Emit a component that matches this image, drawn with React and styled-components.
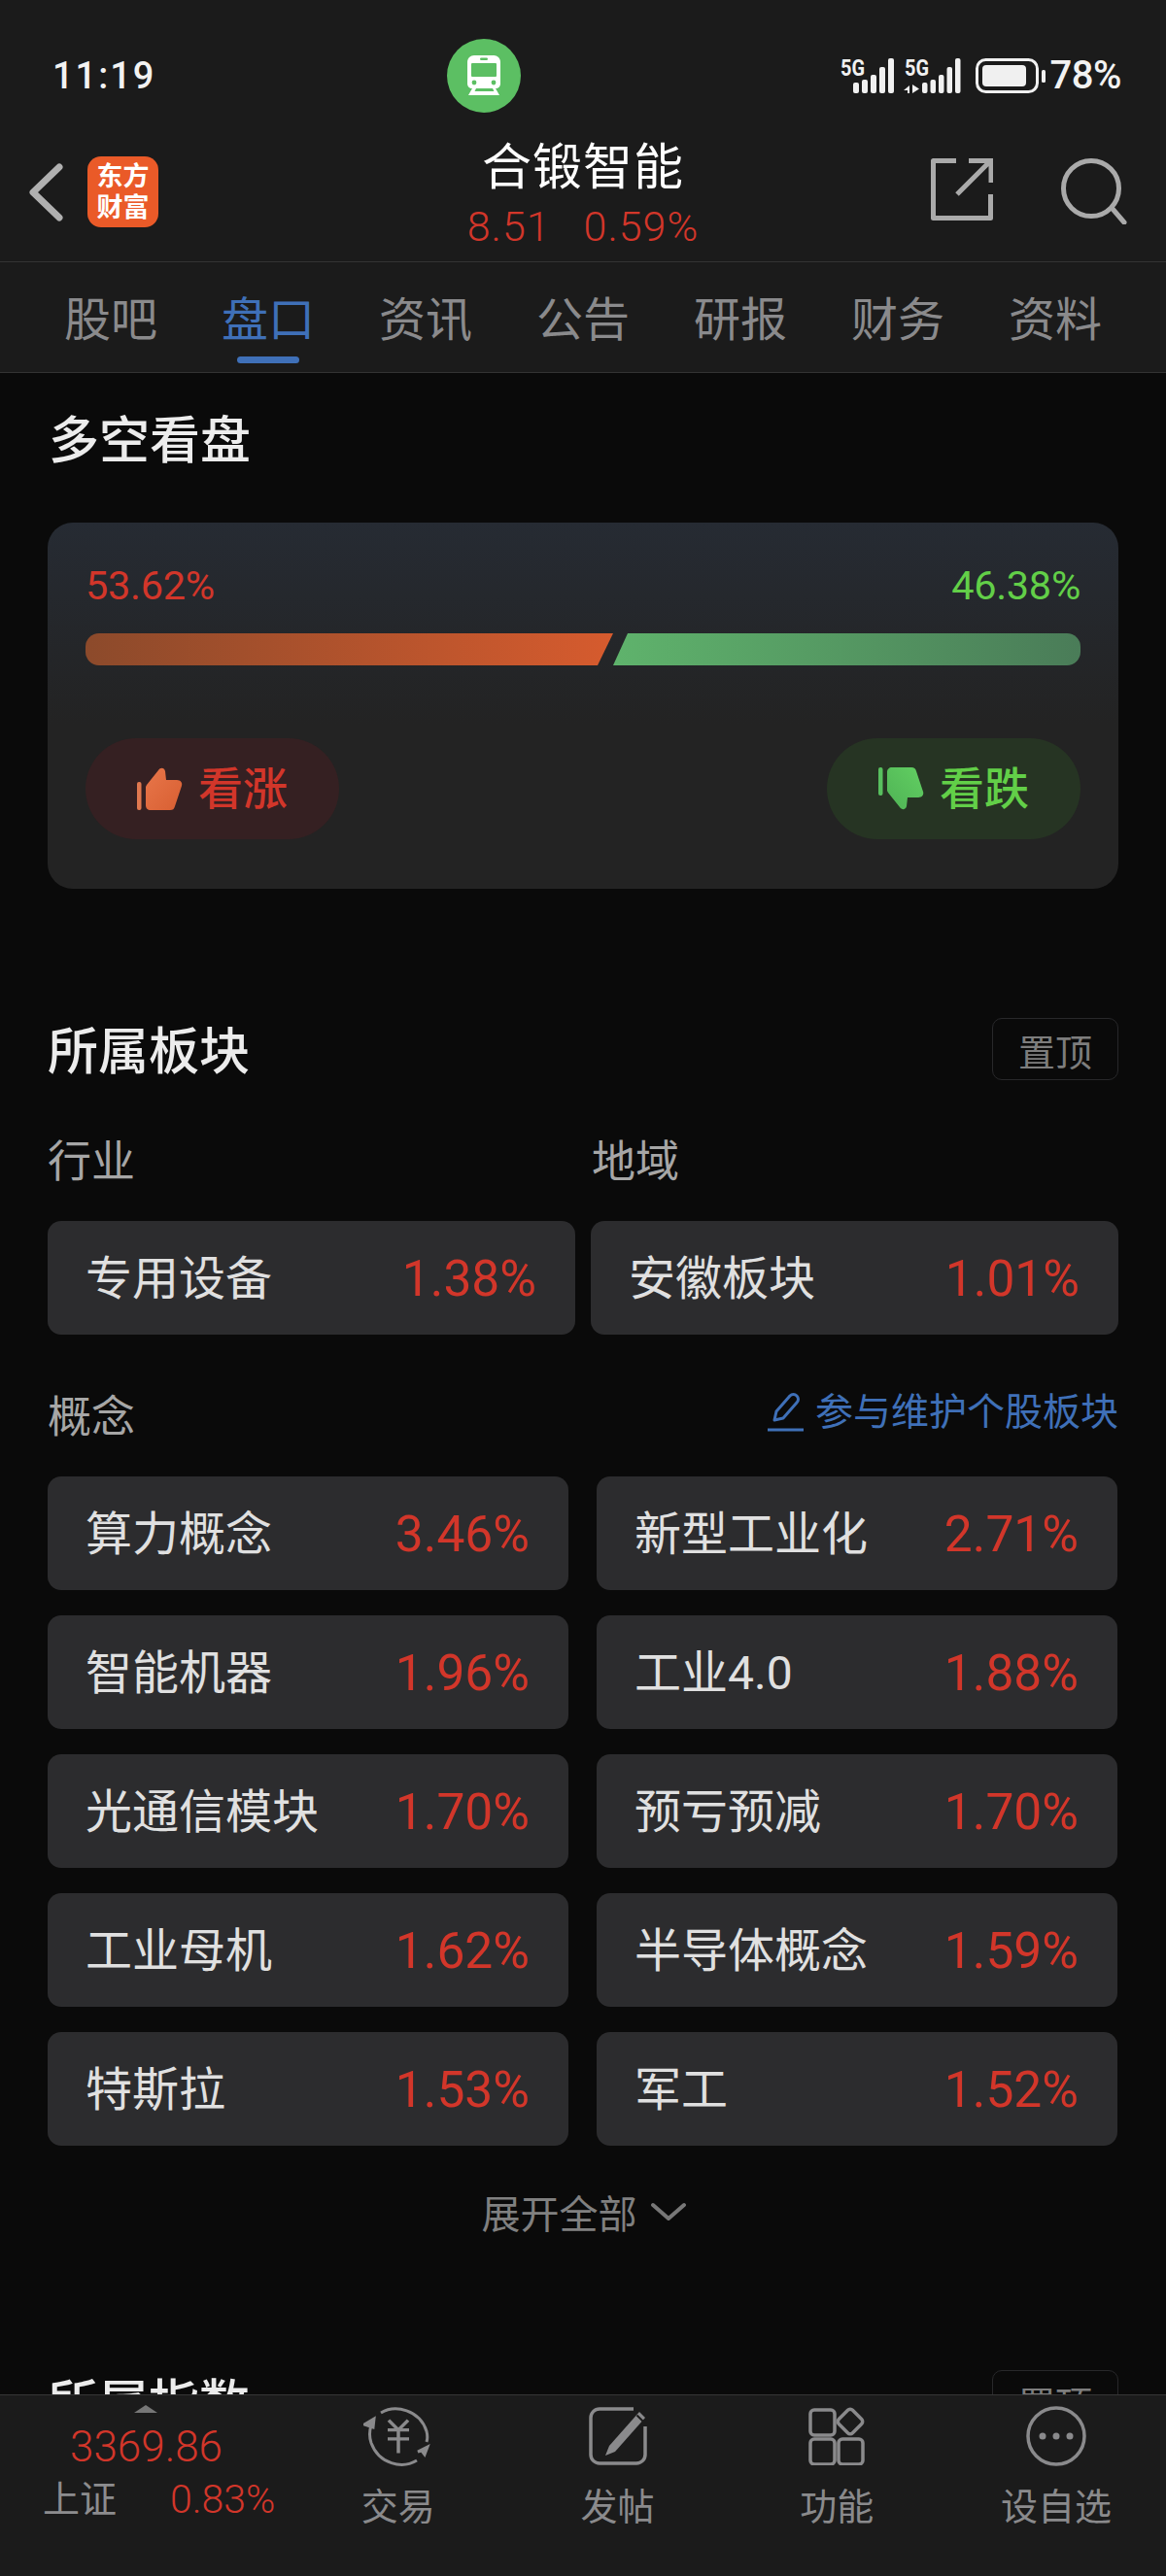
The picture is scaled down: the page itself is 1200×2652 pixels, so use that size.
import React from "react";
import styled, { createGlobalStyle } from "styled-components";

const Global = createGlobalStyle`
  html, body { margin: 0; padding: 0; background: #0a0a0a; }
  * { box-sizing: border-box; }
`;
const FONT = `Roboto, "Noto Sans CJK SC", sans-serif`;
const RED = "#d2362a";
const GREEN = "#62cf48";

const Page = styled.div`
  width: 1200px; height: 2652px; display: flex; flex-direction: column;
  background: #0a0a0a; font-family: ${FONT}; overflow: hidden;
`;
const Top = styled.header`background: #1b1b1b; flex: none;`;
const StatusBar = styled.div`
  height: 136px; display: grid; grid-template-columns: 406px 76px 1fr; align-items: center;
  padding: 40px 46px 20px 54px;
`;
const Time = styled.div`font-size: 38px; font-weight: 500; color: #f2f2f2; letter-spacing: 2px; line-height: 40px;`;
const Badge = styled.div`
  width: 76px; height: 76px; border-radius: 50%; background: #5cbf63;
  display: flex; align-items: center; justify-content: center;
`;
const StatusRight = styled.div`display: flex; align-items: center; justify-content: flex-end; gap: 4px;`;
const Pct = styled.span`font-size: 40px; font-weight: 500; color: #f2f2f2; line-height: 44px; letter-spacing: -0.5px;`;
const NavRow = styled.div`
  height: 135px; display: grid; grid-template-columns: 360px 1fr 360px; align-items: start;
  border-bottom: 1px solid #333; margin-top: -1px;
`;
const NavLeft = styled.div`display: flex; align-items: center; gap: 25px; padding: 26px 0 0 29px;`;
const Logo = styled.div`
  width: 73px; height: 73px; border-radius: 14px; background: #ea5a28; color: #fff;
  font-size: 27px; font-weight: 700; line-height: 32px; text-align: center;
  display: flex; align-items: center; justify-content: center;
`;
const NavCenter = styled.div`display: flex; flex-direction: column; align-items: center; padding-top: 7px;`;
const StockName = styled.div`font-size: 51px; line-height: 62px; color: #fff; letter-spacing: 1px;`;
const StockQuote = styled.div`
  display: flex; gap: 34px; font-size: 43px; font-weight: 300; line-height: 46px; color: ${RED}; letter-spacing: 1px; margin-top: 6px;
`;
const NavRight = styled.div`display: flex; justify-content: flex-end; gap: 70px; padding: 28px 40px 0 0;`;
const Tabs = styled.nav`
  display: grid; grid-template-columns: repeat(7, 162px); padding: 0 33px; height: 114px;
  border-bottom: 1px solid #333;
`;
const Tab = styled.div`
  position: relative; display: flex; justify-content: center; padding-top: 29px;
  font-size: 48px; line-height: 62px; color: ${p => (p.$active ? "#3f70b8" : "#8a8a8c")};
  ${p => p.$active && `
    &::after { content: ""; position: absolute; left: 49px; width: 64px; top: 97px; height: 7px; border-radius: 4px; background: #3f70b8; }
  `}
`;
const Main = styled.main`flex: 1; min-height: 0; overflow: hidden; padding: 37px 49px 0 50px;`;
const Title = styled.h2`margin: 0; height: 60px; padding-top: 4px; font-size: 52px; font-weight: 500; line-height: 60px; color: #ececec;`;
const Card = styled.section`
  margin: 57px 0 0 -1px; height: 377px; padding: 42px 39px 0; border-radius: 26px;
  background: linear-gradient(180deg, #262b33 0%, #232323 55%);
`;
const PctRow = styled.div`display: flex; justify-content: space-between; font-size: 41.5px; line-height: 46px; letter-spacing: -0.3px;`;
const PctVal = styled.span`color: ${p => p.$c};`;
const Bar = styled.div`display: flex; margin-top: 26px; height: 33px; border-radius: 14px; overflow: hidden;`;
const BarUp = styled.div`
  width: 543px; background: linear-gradient(90deg, #8c4a2b, #d65b2e);
  clip-path: polygon(0 0, 100% 0, calc(100% - 16px) 100%, 0 100%);
`;
const BarDown = styled.div`
  flex: 1; background: linear-gradient(90deg, #5fb36c, #4a7c58);
  clip-path: polygon(15px 0, 100% 0, 100% 100%, 0 100%);
`;
const Votes = styled.div`display: flex; justify-content: space-between; margin-top: 75px;`;
const Vote = styled.div`
  width: 261px; height: 104px; border-radius: 52px; background: ${p => p.$bg}; color: ${p => p.$c};
  display: flex; align-items: center; justify-content: center; gap: 16px;
  font-size: 46px; font-weight: 500; line-height: 52px;
`;
const SecHead = styled.div`display: flex; justify-content: space-between; align-items: center; height: 64px; margin-top: ${p => p.$mt}px; margin-left: -1px;`;
const PinBtn = styled.div`
  width: 130px; height: 64px; border: 1px solid #28282a; border-radius: 10px; color: #7d7d7d;
  font-size: 38px; display: flex; align-items: center; justify-content: center;
`;
const LabelGrid = styled.div`display: grid; grid-template-columns: 560px 1fr; height: 54px; margin-top: 56px; margin-left: -1px;`;
const Label = styled.div`height: 54px; padding-top: 3px; font-size: 45px; line-height: 51px; color: #a6a6a6;`;
const IndustryGrid = styled.div`display: grid; grid-template-columns: 543px 543px; gap: 16px; margin: 35px 0 0 -1px;`;
const ConceptHead = styled.div`display: flex; justify-content: space-between; height: 54px; margin-top: 57px; margin-left: -1px;`;
const EditLink = styled.div`display: flex; align-items: center; height: 50px; gap: 11px; font-size: 39px; line-height: 50px; color: #3f70b8; margin-top: -2px;`;
const ConceptGrid = styled.div`display: grid; grid-template-columns: 536px 536px; gap: 26px 29px; margin: 35px 0 0 -1px;`;
const Chip = styled.div`
  height: 117px; border-radius: 14px; background: #2c2c2e; display: flex; align-items: center;
  justify-content: space-between; padding: 3px 40px 0 39px;
`;
const ChipName = styled.span`font-size: 48px; color: #e0e0e0; line-height: 56px;`;
const ChipPct = styled.span`font-size: 51.5px; color: ${RED}; line-height: 56px; font-weight: 400;`;
const Expand = styled.div`
  display: flex; align-items: center; justify-content: center; gap: 14px; height: 50px; margin-top: 43px;
  font-size: 40px; color: #808080;
`;
const Footer = styled.footer`
  flex: none; height: 187px; background: #1b1b1b; border-top: 1px solid #363636;
  display: grid; grid-template-columns: 297px repeat(4, 1fr);
`;
const Index = styled.div`position: relative; padding: 29px 0 0 44px;`;
const Caret = styled.div`
  position: absolute; left: 138px; top: 10px; width: 0; height: 0;
  border-left: 12px solid transparent; border-right: 12px solid transparent; border-bottom: 8px solid #777;
`;
const IndexValue = styled.div`font-size: 44px; font-weight: 300; line-height: 48px; color: ${RED}; margin-left: 28px;`;
const IndexRow = styled.div`display: flex; gap: 55px; margin-top: 5px; font-size: 38px; line-height: 50px; align-items: center;`;
const IndexName = styled.span`color: #8c8c8e;`;
const IndexPct = styled.span`color: ${RED}; font-size: 41px; font-weight: 300;`;
const FootItem = styled.div`display: flex; flex-direction: column; align-items: center; color: #8a8a8c; font-size: 38px; line-height: 46px; padding-top: 11px;`;
const FootIcon = styled.div`height: 62px; display: flex; align-items: center; margin-bottom: 19px;`;

const Train = () => (
  <svg width="36" height="42" viewBox="0 0 36 42">
    <path d="M8 0h20c4 0 7 3 7 7v22c0 3-2 5-5 5H6c-3 0-5-2-5-5V7c0-4 3-7 7-7z" fill="#fff" />
    <rect x="5" y="8" width="26" height="14" rx="1" fill="#5cbf63" />
    <rect x="14" y="2.5" width="8" height="2.5" rx="1.2" fill="#5cbf63" />
    <circle cx="8" cy="28" r="2.4" fill="#5cbf63" /><circle cx="28" cy="28" r="2.4" fill="#5cbf63" />
    <path d="M6 34l-4 7h32l-4-7h-3l1.500 3H8.500L10 34z" fill="#fff" />
  </svg>
);
const TOPS = [25, 22, 17, 9, 0];
const Signal = ({ x, bx, w, arrows }) => (
  <g>
    <text x={x} y="18" fontSize="24" fontWeight="700" fill="#f0f0f0" fontFamily="Roboto" textLength="25" lengthAdjust="spacingAndGlyphs">5G</text>
    {TOPS.map((t, i) => <rect key={i} x={bx + i * (w + 3)} y={t} width={w} height={36 - t} rx="2" fill="#f0f0f0" />)}
    {arrows && <path d="M71 36v-8l-6 5h4v3zM74 27v9l7-4.500z" fill="#f0f0f0" />}
  </g>
);
const StatusIcons = () => (
  <svg width="212" height="37" viewBox="0 0 212 37">
    <Signal x={0} bx={13} w={6} />
    <Signal x={66} bx={84} w={5.5} arrows />
    <rect x="140.500" y="1.500" width="62" height="33" rx="9" fill="none" strokeWidth="3" stroke="#f0f0f0" />
    <rect x="146" y="7" width="45" height="22" rx="4" fill="#f0f0f0" />
    <rect x="207" y="12" width="4" height="13" rx="1.500" fill="#f0f0f0" />
  </svg>
);
const Back = () => (
  <svg width="36" height="60" viewBox="0 0 36 60"><path d="M32 4L5 30l27 26" fill="none" stroke="#b0b0b0" strokeWidth="7" strokeLinecap="round" strokeLinejoin="round" /></svg>
);
const Share = () => (
  <svg width="64" height="64" viewBox="0 0 64 64" fill="none" stroke="#aaa" strokeWidth="5">
    <path d="M26 2.500H2.500v59h59V37" strokeLinejoin="round" />
    <path d="M27 37L61 3M39 2.500h23V25" />
  </svg>
);
const Search = () => (
  <svg width="68" height="68" viewBox="0 0 68 68" fill="none" stroke="#aaa" strokeWidth="5" strokeLinecap="round">
    <circle cx="31" cy="31" r="28.500" /><path d="M53 52l12 14" />
  </svg>
);
const Thumb = ({ down }) => (
  <svg width="47" height="44" viewBox="0 0 47 44" style={down ? { transform: "scaleY(-1)" } : undefined}>
    <defs>
      <linearGradient id={down ? "gd" : "gu"} x1="0" y1="0" x2="1" y2="1">
        <stop offset="0" stopColor={down ? "#4fb355" : "#e8764a"} />
        <stop offset="1" stopColor={down ? "#62cf62" : "#d85f32"} />
      </linearGradient>
    </defs>
    <rect x="0" y="15" width="4.500" height="29" rx="2" fill={down ? "#58bf5e" : "#e0784f"} />
    <path d="M10 18L22 3c2-3 6-3 7 1l1 9h11c4 0 6 3 5 6l-7 21c-1 3-2 4-5 4H14c-3 0-5-2-5-5V20z" fill={`url(#${down ? "gd" : "gu"})`} />
  </svg>
);
const Pencil = () => (
  <svg width="38" height="40" viewBox="0 0 38 40" fill="none" stroke="#3f70b8" strokeWidth="3">
    <path d="M7 28L9 19 23 3c2-2 5-2 7 0s2 5 0 7L16 26z" strokeLinejoin="round" />
    <path d="M0 38h37" />
  </svg>
);
const Chevron = () => (
  <svg width="36" height="20" viewBox="0 0 36 20"><path d="M2 3l16 14L34 3" fill="none" stroke="#777" strokeWidth="4" strokeLinecap="round" strokeLinejoin="round" /></svg>
);
const TradeIcon = () => (
  <svg width="72" height="62" viewBox="0 0 72 62" fill="none" stroke="#8a8a8c" strokeWidth="3">
    <path d="M18 7C33-2 58 4 65 26c1 4 1 8 0 11" />
    <path d="M56 47l10-5-3 8-3-4z" fill="#8a8a8c" />
    <path d="M55 56C40 65 16 60 8 38c-2-6-2-12 0-18" />
    <path d="M1 19l10-6-1 9z" fill="#8a8a8c" />
    <path d="M26 18l10 11 10-11M25 29h22M25 39h22M36 29v26" strokeWidth="3.500" transform="translate(0 -2) scale(1 .92)" />
  </svg>
);
const PostIcon = () => (
  <svg width="60" height="60" viewBox="0 0 60 60" fill="none" stroke="#8a8a8c" strokeWidth="3.500">
    <path d="M46 2H11C6 2 2 6 2 11v38c0 5 4 9 9 9h38c5 0 9-4 9-9V20" />
    <path d="M21 40L52 5l6 6-31 35-10 4z" fill="#8a8a8c" stroke="none" />
    <path d="M49.500 8.500l6 6" stroke="#1b1b1b" strokeWidth="2" />
  </svg>
);
const FuncIcon = () => (
  <svg width="58" height="60" viewBox="0 0 58 60" fill="none" stroke="#8a8a8c" strokeWidth="3.500">
    <rect x="2" y="3" width="25" height="26" rx="4" />
    <rect x="2" y="33" width="25" height="26" rx="4" />
    <rect x="31" y="33" width="25" height="26" rx="4" />
    <rect x="33" y="5" width="20" height="20" rx="3.500" transform="rotate(45 43 15)" />
  </svg>
);
const MoreIcon = () => (
  <svg width="62" height="62" viewBox="0 0 62 62" fill="none">
    <circle cx="31" cy="31" r="29" stroke="#8a8a8c" strokeWidth="3.500" />
    <circle cx="17" cy="31" r="3.500" fill="#8a8a8c" /><circle cx="31" cy="31" r="3.500" fill="#8a8a8c" /><circle cx="45" cy="31" r="3.500" fill="#8a8a8c" />
  </svg>
);

const tabs = ["股吧", "盘口", "资讯", "公告", "研报", "财务", "资料"];
const concepts = [
  ["算力概念", "3.46%"], ["新型工业化", "2.71%"], ["智能机器", "1.96%"], ["工业4.0", "1.88%"],
  ["光通信模块", "1.70%"], ["预亏预减", "1.70%"], ["工业母机", "1.62%"], ["半导体概念", "1.59%"],
  ["特斯拉", "1.53%"], ["军工", "1.52%"],
];
const foot = [["交易", <TradeIcon />], ["发帖", <PostIcon />], ["功能", <FuncIcon />], ["设自选", <MoreIcon />]];

export default function App() {
  return (
    <Page>
      <Global />
      <Top>
        <StatusBar>
          <Time>11:19</Time>
          <Badge><Train /></Badge>
          <StatusRight><StatusIcons /><Pct>78%</Pct></StatusRight>
        </StatusBar>
        <NavRow>
          <NavLeft>
            <Back />
            <Logo>东方<br />财富</Logo>
          </NavLeft>
          <NavCenter>
            <StockName>合锻智能</StockName>
            <StockQuote><span>8.51</span><span>0.59%</span></StockQuote>
          </NavCenter>
          <NavRight><Share /><Search /></NavRight>
        </NavRow>
        <Tabs>
          {tabs.map((t, i) => <Tab key={t} $active={i === 1}>{t}</Tab>)}
        </Tabs>
      </Top>
      <Main>
        <Title>多空看盘</Title>
        <Card>
          <PctRow><PctVal $c={RED}>53.62%</PctVal><PctVal $c={GREEN}>46.38%</PctVal></PctRow>
          <Bar><BarUp /><BarDown /></Bar>
          <Votes>
            <Vote $bg="#352022" $c={RED}><Thumb />看涨</Vote>
            <Vote $bg="#263423" $c={GREEN}><Thumb down />看跌</Vote>
          </Votes>
        </Card>
        <SecHead $mt={133}><Title>所属板块</Title><PinBtn>置顶</PinBtn></SecHead>
        <LabelGrid><Label>行业</Label><Label>地域</Label></LabelGrid>
        <IndustryGrid>
          <Chip><ChipName>专用设备</ChipName><ChipPct>1.38%</ChipPct></Chip>
          <Chip><ChipName>安徽板块</ChipName><ChipPct>1.01%</ChipPct></Chip>
        </IndustryGrid>
        <ConceptHead>
          <Label>概念</Label>
          <EditLink><Pencil />参与维护个股板块</EditLink>
        </ConceptHead>
        <ConceptGrid>
          {concepts.map(([n, p]) => <Chip key={n}><ChipName>{n}</ChipName><ChipPct>{p}</ChipPct></Chip>)}
        </ConceptGrid>
        <Expand>展开全部<Chevron /></Expand>
        <SecHead $mt={138}><Title>所属指数</Title><PinBtn>置顶</PinBtn></SecHead>
      </Main>
      <Footer>
        <Index>
          <Caret />
          <IndexValue>3369.86</IndexValue>
          <IndexRow><IndexName>上证</IndexName><IndexPct>0.83%</IndexPct></IndexRow>
        </Index>
        {foot.map(([l, ic]) => (
          <FootItem key={l}><FootIcon>{ic}</FootIcon>{l}</FootItem>
        ))}
      </Footer>
    </Page>
  );
}
